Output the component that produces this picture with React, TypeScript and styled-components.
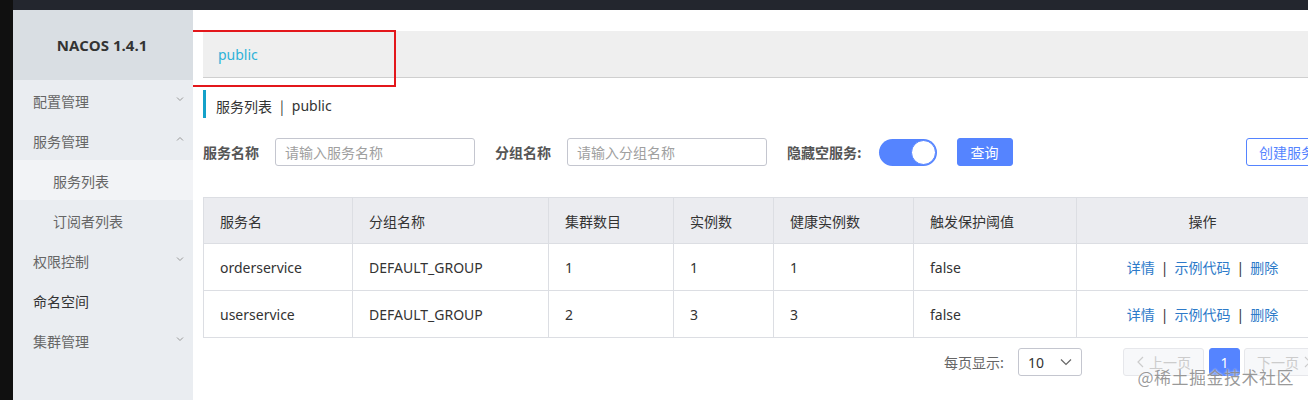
import React from "react";
import styled, { createGlobalStyle } from "styled-components";

const Global = createGlobalStyle`
  html, body { margin: 0; padding: 0; background: #111; }
  body { font-family: "Noto Sans CJK SC", "Noto Sans", sans-serif; }
  * { box-sizing: border-box; }
`;

const Page = styled.div`
  position: relative;
  display: flex;
  width: 1308px;
  height: 400px;
  overflow: hidden;
  background: #101010;
`;

const LeftStrip = styled.div`
  width: 13px;
  flex: none;
  background: #101010;
`;

const Frame = styled.div`
  flex: 1;
  display: flex;
  flex-direction: column;
  min-width: 0;
`;

const TopBar = styled.div`
  height: 10px;
  flex: none;
  background: #23262e;
`;

const Body = styled.div`
  flex: 1;
  display: flex;
  min-height: 0;
`;

const Sidebar = styled.nav`
  width: 180px;
  flex: none;
  background: #eaedf1;
  display: flex;
  flex-direction: column;
`;

const Logo = styled.div`
  height: 70px;
  background: #d9dee3;
  display: flex;
  align-items: center;
  justify-content: center;
  font-family: "Open Sans", "Noto Sans", sans-serif;
  font-weight: 700;
  font-size: 15px;
  color: #333;
  padding-right: 2px;
`;

const MenuItem = styled.div<{ $sub?: boolean; $active?: boolean; $dark?: boolean }>`
  height: 40px;
  display: flex;
  align-items: center;
  justify-content: space-between;
  padding-left: ${(p) => (p.$sub ? 40 : 20)}px;
  padding-right: 8px;
  padding-top: 2px;
  font-size: 14px;
  color: ${(p) => (p.$dark ? "#333" : "#666")};
  background: ${(p) => (p.$active ? "#f2f3f6" : "transparent")};
`;

const Chevron = styled.svg`
  width: 10px;
  height: 10px;
  color: #999;
  margin-top: -4px;
`;

const Main = styled.main`
  flex: 1;
  background: #fff;
  overflow: hidden;
  padding: 21px 0 0 10px;
`;

const Content = styled.div`
  position: relative;
  width: 1125px;
`;

const NsBar = styled.div`
  height: 47px;
  background: #efefef;
  border-bottom: 1px solid #cfcfcf;
  display: flex;
  align-items: center;
  padding-left: 15px;
  font-size: 14px;
  color: #2eb2d8;
  font-family: "Noto Sans", sans-serif;
`;

const Annotation = styled.div`
  position: absolute;
  left: -17px;
  top: -1px;
  width: 210px;
  height: 57px;
  border: 2px solid #e3171b;
  pointer-events: none;
`;

const Title = styled.div`
  margin-top: 12px;
  height: 28px;
  border-left: 3px solid #14a1c9;
  padding-left: 10px;
  padding-top: 3px;
  display: flex;
  align-items: center;
  font-size: 14px;
  color: #333;
  gap: 8px;
`;

const Latin = styled.span`
  font-family: "Noto Sans", sans-serif;
`;

const Filters = styled.div`
  margin-top: 20px;
  height: 28px;
  display: flex;
  align-items: center;
`;

const Label = styled.span`
  font-size: 14px;
  font-weight: 700;
  color: #555;
  margin-right: 16px;
`;

const Input = styled.div`
  width: 200px;
  height: 28px;
  border: 1px solid #c4c6cf;
  border-radius: 3px;
  display: flex;
  align-items: center;
  padding-left: 9px;
  font-size: 14px;
  color: #a0a0a0;
  margin-right: 20px;
`;

const Switch = styled.div`
  width: 58px;
  height: 27px;
  border-radius: 14px;
  background: #5584ff;
  display: flex;
  align-items: center;
  justify-content: flex-end;
  padding-right: 1px;
  margin-left: 1px;
  margin-right: 20px;
`;

const Knob = styled.div`
  width: 25px;
  height: 25px;
  border-radius: 50%;
  background: #fff;
  border: 1px solid #5584ff;
`;

const Button = styled.div<{ $outline?: boolean }>`
  height: 28px;
  border-radius: 3px;
  display: flex;
  align-items: center;
  font-size: 14px;
  color: ${(p) => (p.$outline ? "#5584ff" : "#fff")};
  background: ${(p) => (p.$outline ? "#fff" : "#5584ff")};
  border: 1px solid #5584ff;
  padding: 0 ${(p) => (p.$outline ? 12 : 13)}px;
  ${(p) => (p.$outline ? "margin-left: auto;" : "")}
`;

const Table = styled.table`
  margin-top: 31px;
  width: 100%;
  border-collapse: collapse;
  font-size: 14px;
  color: #333;
  table-layout: fixed;
`;

const Th = styled.th<{ $center?: boolean }>`
  height: 46px;
  background: #ebecf0;
  font-weight: 400;
  text-align: ${(p) => (p.$center ? "center" : "left")};
  padding: 0 16px;
  border: 1px solid #dcdee3;
  color: #333;
`;

const Td = styled.td<{ $center?: boolean }>`
  height: 47px;
  padding: 0 16px;
  border: 1px solid #dcdee3;
  text-align: ${(p) => (p.$center ? "center" : "left")};
  font-family: "Noto Sans", "Noto Sans CJK SC", sans-serif;
  color: #333;
`;

const Link = styled.span`
  color: #2d7ac9;
  font-family: "Noto Sans CJK SC", sans-serif;
`;

const Sep = styled.span`
  color: #333;
  margin: 0 6px;
`;

const Pager = styled.div`
  margin-top: 10px;
  display: flex;
  align-items: center;
  justify-content: flex-end;
  padding-right: 3px;
  font-size: 14px;
  color: #666;
`;

const Select = styled.div`
  width: 64px;
  height: 28px;
  border: 1px solid #c4c6cf;
  border-radius: 3px;
  display: flex;
  align-items: center;
  justify-content: space-between;
  padding: 0 8px 0 9px;
  margin-left: 14px;
  margin-right: 41px;
  color: #333;
  font-family: "Noto Sans", sans-serif;
`;

const PageBtn = styled.div<{ $active?: boolean }>`
  height: 28px;
  min-width: ${(p) => (p.$active ? 31 : 81)}px;
  border-radius: 3px;
  display: flex;
  align-items: center;
  justify-content: center;
  gap: 3px;
  margin-left: ${(p) => (p.$active ? 5 : 4)}px;
  background: ${(p) => (p.$active ? "#5584ff" : "#f7f8fa")};
  border: 1px solid ${(p) => (p.$active ? "#5584ff" : "#e6e7eb")};
  color: ${(p) => (p.$active ? "#fff" : "#ccc")};
  font-family: "Noto Sans", "Noto Sans CJK SC", sans-serif;
  &:first-child { margin-left: 0; }
`;

const PageGroup = styled.div`
  display: flex;
  align-items: center;
`;

const Watermark = styled.div`
  position: absolute;
  right: 14px;
  bottom: 11px;
  font-size: 17px;
  color: rgba(120, 120, 120, 0.75);
  text-shadow: 0 0 2px #fff;
  letter-spacing: 0.5px;
  pointer-events: none;
`;

const Down = () => (
  <Chevron viewBox="0 0 10 10" fill="none" stroke="currentColor" strokeWidth="1">
    <path d="M2 3.5 L5 6.5 L8 3.5" />
  </Chevron>
);
const Up = () => (
  <Chevron viewBox="0 0 10 10" fill="none" stroke="currentColor" strokeWidth="1">
    <path d="M2 6.5 L5 3.5 L8 6.5" />
  </Chevron>
);

const columns = [
  { t: "服务名", w: 149 },
  { t: "分组名称", w: 196 },
  { t: "集群数目", w: 125 },
  { t: "实例数", w: 100 },
  { t: "健康实例数", w: 140 },
  { t: "触发保护阈值", w: 163 },
  { t: "操作", w: 252, c: true },
];

const rows = [
  ["orderservice", "DEFAULT_GROUP", "1", "1", "1", "false"],
  ["userservice", "DEFAULT_GROUP", "2", "3", "3", "false"],
];

export default function App() {
  return (
    <>
      <Global />
      <Page>
        <LeftStrip />
        <Frame>
          <TopBar />
          <Body>
            <Sidebar>
              <Logo>NACOS 1.4.1</Logo>
              <MenuItem>配置管理<Down /></MenuItem>
              <MenuItem>服务管理<Up /></MenuItem>
              <MenuItem $sub $active>服务列表</MenuItem>
              <MenuItem $sub>订阅者列表</MenuItem>
              <MenuItem>权限控制<Down /></MenuItem>
              <MenuItem $dark>命名空间</MenuItem>
              <MenuItem>集群管理<Down /></MenuItem>
            </Sidebar>
            <Main>
              <Content>
                <NsBar>public</NsBar>
                <Annotation />
                <Title>
                  <span>服务列表</span>
                  <span>|</span>
                  <Latin>public</Latin>
                </Title>
                <Filters>
                  <Label>服务名称</Label>
                  <Input>请输入服务名称</Input>
                  <Label>分组名称</Label>
                  <Input>请输入分组名称</Input>
                  <Label>隐藏空服务:</Label>
                  <Switch><Knob /></Switch>
                  <Button>查询</Button>
                  <Button $outline>创建服务</Button>
                </Filters>
                <Table>
                  <colgroup>
                    {columns.map((c) => (
                      <col key={c.t} style={{ width: c.w }} />
                    ))}
                  </colgroup>
                  <thead>
                    <tr>
                      {columns.map((c) => (
                        <Th key={c.t} $center={c.c}>{c.t}</Th>
                      ))}
                    </tr>
                  </thead>
                  <tbody>
                    {rows.map((r) => (
                      <tr key={r[0]}>
                        {r.map((v, i) => (
                          <Td key={i}>{v}</Td>
                        ))}
                        <Td $center>
                          <Link>详情</Link><Sep>|</Sep><Link>示例代码</Link><Sep>|</Sep><Link>删除</Link>
                        </Td>
                      </tr>
                    ))}
                  </tbody>
                </Table>
                <Pager>
                  <span>每页显示:</span>
                  <Select>
                    <span>10</span>
                    <svg width="14" height="14" viewBox="0 0 14 14" fill="none" stroke="#666" strokeWidth="1.2">
                      <path d="M2 4.5 L7 9.5 L12 4.5" />
                    </svg>
                  </Select>
                  <PageGroup>
                    <PageBtn>
                      <svg width="10" height="14" viewBox="0 0 10 14" fill="none" stroke="#ccc" strokeWidth="1.2">
                        <path d="M7 2 L2 7 L7 12" />
                      </svg>
                      上一页
                    </PageBtn>
                    <PageBtn $active>1</PageBtn>
                    <PageBtn>
                      下一页
                      <svg width="10" height="14" viewBox="0 0 10 14" fill="none" stroke="#ccc" strokeWidth="1.2">
                        <path d="M3 2 L8 7 L3 12" />
                      </svg>
                    </PageBtn>
                  </PageGroup>
                </Pager>
              </Content>
            </Main>
          </Body>
        </Frame>
        <Watermark>@稀土掘金技术社区</Watermark>
      </Page>
    </>
  );
}
